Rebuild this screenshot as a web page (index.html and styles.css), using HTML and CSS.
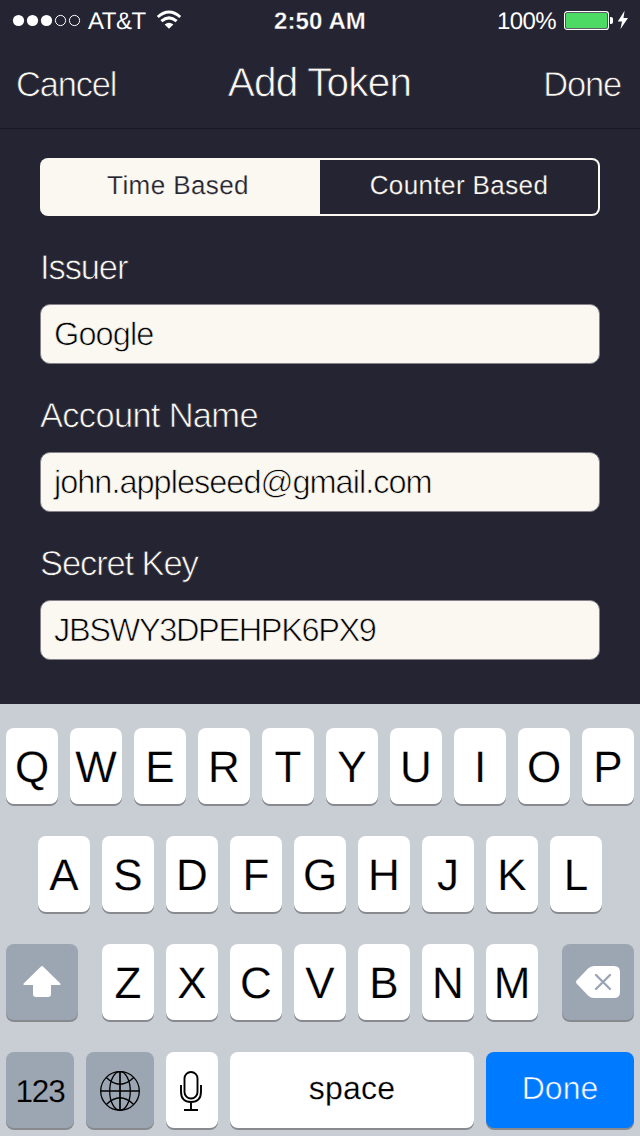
FILE: index.html
```html
<!DOCTYPE html>
<html lang="en">
<head>
<meta charset="utf-8">
<title>Add Token</title>
<link rel="stylesheet" href="styles.css">
</head>
<body>
<div class="screen">
  <header class="status">
    <div class="status-left">
      <svg class="signal" width="68" height="12" viewBox="0 0 68 12"><g fill="#fff"><circle cx="6.500" cy="6.500" r="5.600"/><circle cx="20.500" cy="6.500" r="5.600"/><circle cx="34.500" cy="6.500" r="5.600"/></g><g fill="none" stroke="#fff"><circle cx="48.500" cy="6.500" r="5.100"/><circle cx="62.500" cy="6.500" r="5.100"/></g></svg>
      <span class="carrier">AT&amp;T</span>
      <svg class="wifi" width="26" height="20" viewBox="0 0 26 20"><path d="M13 18.800 8.600 14.400Q13 11.200 17.400 14.400Z" fill="#fff"/><g fill="none" stroke="#fff" stroke-width="3"><path d="M1.800 7Q13-3 24.200 7"/><path d="M5.400 11.200Q13 4.600 20.600 11.200"/></g></svg>
    </div>
    <span class="clock">2:50 AM</span>
    <div class="status-right">
      <span class="percent">100%</span>
      <svg class="battery" width="50" height="20" viewBox="0 0 50 20"><rect x=".6" y="1.600" width="43.800" height="17.800" rx="2.500" fill="none" stroke="#fff" stroke-width="1.200"/><rect x="2" y="3" width="41" height="15" rx="1" fill="#4cd964"/><path d="M46 7h1q2 0 2 2v3q0 2-2 2h-1z" fill="#fff"/></svg>
      <svg class="bolt" width="12" height="20" viewBox="0 0 12 20"><path d="M7.600.8.8 11.400H5L3.400 19.200 11 8H6.500Z" fill="#fff"/></svg>
    </div>
  </header>
  <nav class="nav">
    <span class="nav-item light">Cancel</span>
    <span class="nav-title light">Add Token</span>
    <span class="nav-item light right">Done</span>
  </nav>
  <main class="form">
    <div class="segments">
      <div class="segment selected">Time Based</div>
      <div class="segment">Counter Based</div>
    </div>
    <div class="field"><div class="label light tight">Issuer</div><div class="input">Google</div></div>
    <div class="field"><div class="label light">Account Name</div><div class="input email">john.appleseed@gmail.com</div></div>
    <div class="field"><div class="label light tight">Secret Key</div><div class="input secret">JBSWY3DPEHPK6PX9</div></div>
  </main>
  <section class="keyboard">
    <div class="row"><div class="key">Q</div><div class="key">W</div><div class="key">E</div><div class="key">R</div><div class="key">T</div><div class="key">Y</div><div class="key">U</div><div class="key">I</div><div class="key">O</div><div class="key">P</div></div>
    <div class="row"><div class="key">A</div><div class="key">S</div><div class="key">D</div><div class="key">F</div><div class="key">G</div><div class="key">H</div><div class="key">J</div><div class="key">K</div><div class="key">L</div></div>
    <div class="row">
      <div class="key dark shift"><svg width="40" height="34" viewBox="0 0 40 34"><path d="M19 1.600q1-1 2 0L38.400 18.600q1 1.400-.8 1.400H29v9q0 3-3 3H14q-3 0-3-3V20H2.400q-1.800 0-.8-1.400Z" fill="#fff"/></svg></div>
      <div class="key">Z</div><div class="key">X</div><div class="key">C</div><div class="key">V</div><div class="key">B</div><div class="key">N</div><div class="key">M</div>
      <div class="key dark delete"><svg width="44" height="32" viewBox="0 0 44 32"><path d="M.6 17.500q-1.200-1.500 0-3L12 2.500Q14.500 0 18 0H38q6 0 6 6V26q0 6-6 6H18q-3.500 0-6-2.500Z" fill="#fff"/><path d="M20 9 34 23M34 9 20 23" stroke="#9ca6b3" stroke-width="2.400" stroke-linecap="round"/></svg></div>
    </div>
    <div class="row">
      <div class="key dark wide numbers">123</div>
      <div class="key dark wide"><svg width="42" height="42" viewBox="0 0 42 42"><g fill="none" stroke="#000" stroke-width="1.300"><circle cx="21" cy="21" r="19.300"/><ellipse cx="21" cy="21" rx="10.300" ry="19.300"/><path d="M7.300 7.500Q21 21 34.700 7.500M7.300 34.500Q21 21 34.700 34.500"/><path d="M21 1.500v39M1.500 21h39" stroke-width="1.700"/></g></svg></div>
      <div class="key mic"><svg width="24" height="42" viewBox="0 0 24 42"><g fill="none" stroke="#000" stroke-width="1.900"><rect x="5.500" y="2" width="13" height="26.500" rx="6.500"/><path d="M2 15v6.500Q2 32 12 32T22 21.500V15M12 32v8M5 40h14"/></g></svg></div>
      <div class="key space">space</div>
      <div class="key done">Done</div>
    </div>
  </section>
</div>
</body>
</html>
```
FILE: styles.css
```css
* { box-sizing: border-box; }
body { margin: 0; }
.screen {
  width: 640px; height: 1136px; overflow: hidden;
  display: flex; flex-direction: column;
  background: #252432; color: #fbf8f1;
  font-family: "Liberation Sans", Arial, sans-serif;
  white-space: nowrap;
  text-rendering: geometricPrecision;
}
svg { display: block; flex: none; overflow: visible; }
.status { height: 40px; display: grid; grid-template-columns: 1fr auto 1fr; color: #fff; font-size: 24px; line-height: 43px; }
.status-left, .status-right { display: flex; align-items: flex-start; }
.status-right { justify-content: flex-end; padding-right: 11px; }
.signal { margin: 14px 8px 0 12px; }
.carrier { letter-spacing: -.5px; }
.wifi { margin: 10px 0 0 10px; }
.clock { font-weight: 700; font-size: 24px; letter-spacing: .1px; -webkit-text-stroke: .3px #252432; }
.percent { letter-spacing: -.6px; }
.battery { margin: 10px 0 0 8px; }
.bolt { margin: 10px 0 0 3px; }

/* Background-coloured outline thins the strokes to a light weight. */
.light { -webkit-text-stroke: .7px #252432; }
.nav {
  height: 89px; flex: none; padding: 0 19px 0 16px; border-bottom: 1px solid #181722;
  display: grid; grid-template-columns: 1fr auto 1fr; align-items: center;
}
.nav-item { font-size: 34.5px; letter-spacing: -1.2px; padding-top: 2px; }
.right { text-align: right; }
.nav-title { font-size: 40.5px; padding: 0 0 4px 2px; letter-spacing: -.8px; }
.form { padding: 29px 40px 0; flex: 1; }
.segments { display: flex; height: 58px; }
.segment {
  width: 280px; border: 2px solid #fbf8f1; border-left: 0; border-radius: 0 8px 8px 0;
  text-align: center; font-size: 26px; line-height: 50px; letter-spacing: .4px;
  -webkit-text-stroke: .2px #252432;
}
.selected {
  background: #fbf8f1; color: #252432; border-radius: 8px 0 0 8px; padding-right: 2px;
  -webkit-text-stroke-color: #fbf8f1;
}
.field { margin-top: 30px; }
.label { height: 42px; line-height: 44px; font-size: 34.5px; letter-spacing: -.7px; margin-bottom: 16px; }
.tight { letter-spacing: -1.1px; }
.input {
  height: 60px; border: 1px solid #85828a; border-radius: 10px; padding-left: 13px;
  background: #fbf8f1; color: #000; font-size: 32.5px; line-height: 58px;
  letter-spacing: -.9px; -webkit-text-stroke: .7px #fbf8f1;
}
.email { letter-spacing: -1px; }
.secret { letter-spacing: -1.35px; }
.keyboard { height: 432px; flex: none; background: #c9cdd4; padding: 24px 6px 0; display: flex; flex-direction: column; gap: 32px; color: #000; }
.row { display: flex; justify-content: center; gap: 12px; height: 76px; flex: none; }
.key {
  width: 52px; flex: none; display: flex; align-items: center; justify-content: center;
  background: #fff; border-radius: 8px; box-shadow: 0 2px 0 #888a8e;
  font-size: 44px; padding-top: 3px; -webkit-text-stroke: .2px #fff;
}
.dark { background: #9ca6b3; -webkit-text-stroke-color: #9ca6b3; padding-top: 2px; }
.shift { width: 72px; margin-right: 12px; padding-top: 0; }
.delete { width: 72px; margin-left: 12px; padding: 0; }
.wide { width: 68px; }
.mic { padding: 2px 2px 0 0; }
.numbers { font-size: 31.5px; letter-spacing: -1.2px; }
.space { width: 244px; padding: 0 0 4px; font-size: 32px; letter-spacing: .2px; }
.done { width: 148px; background: #007aff; color: #fff; padding: 0 0 4px; font-size: 32px; -webkit-text-stroke: .6px #007aff; }
```
